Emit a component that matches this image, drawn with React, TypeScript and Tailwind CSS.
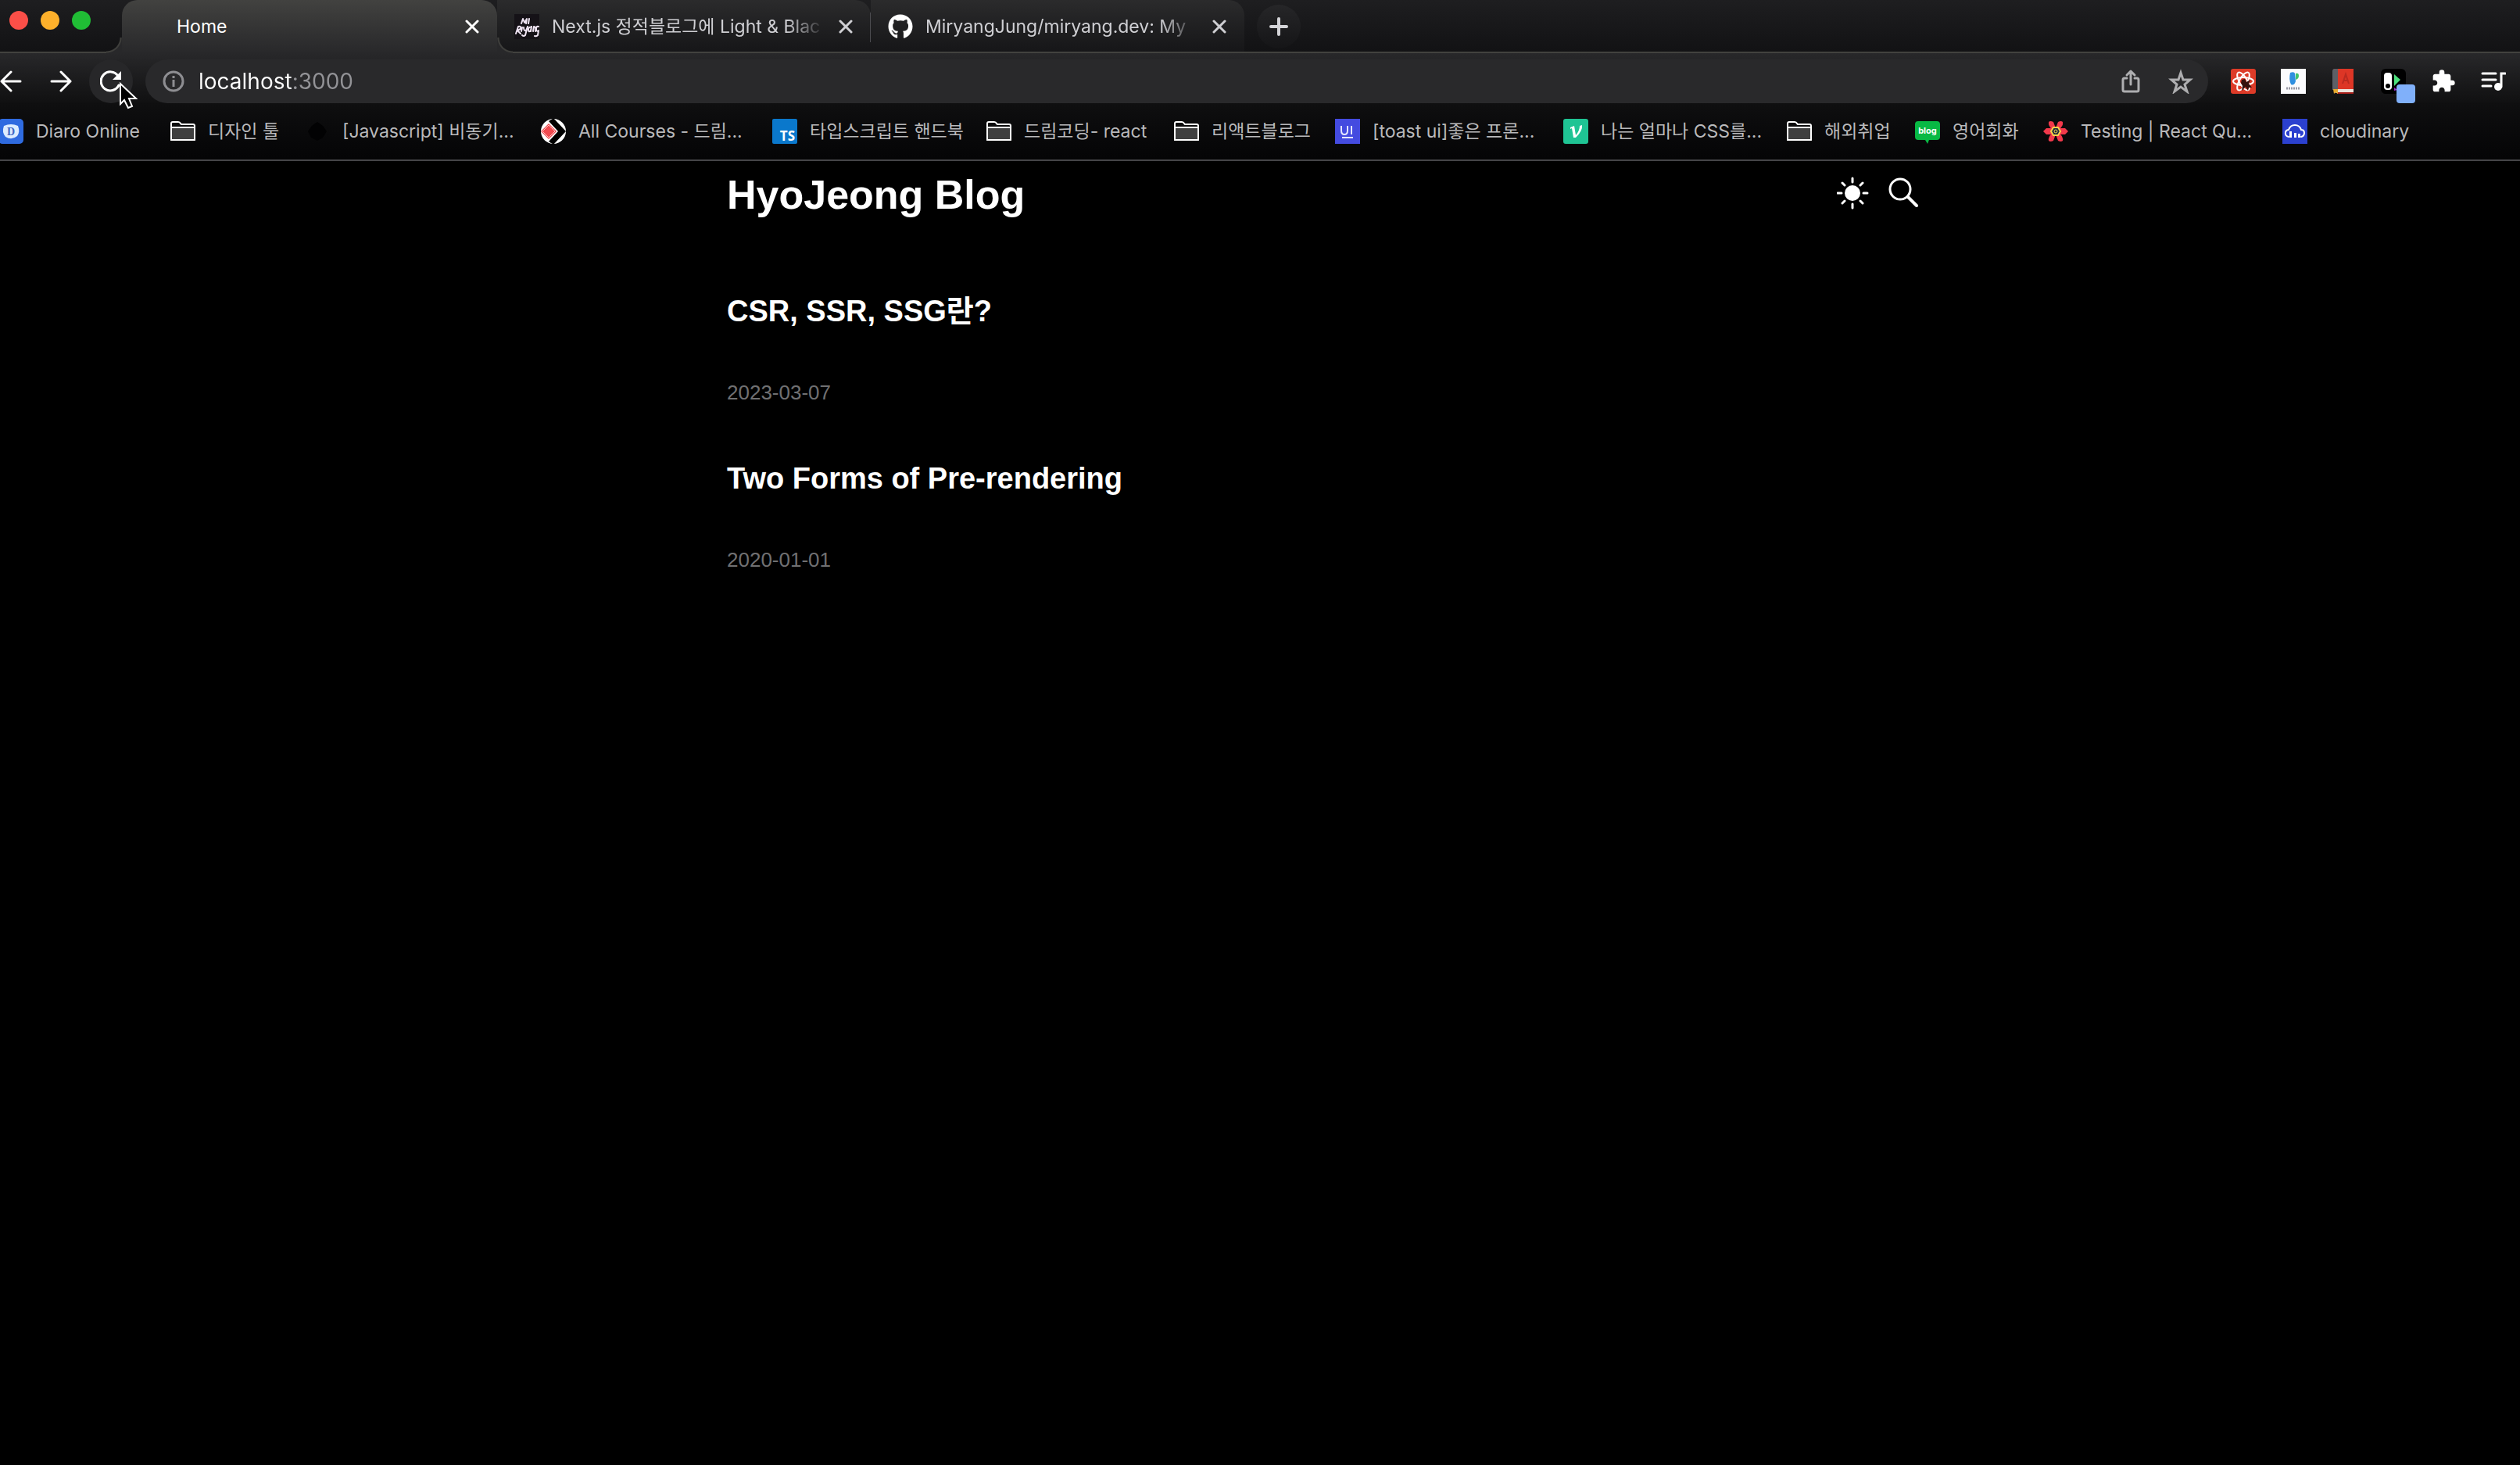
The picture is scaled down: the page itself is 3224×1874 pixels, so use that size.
import type { ReactNode } from 'react';
import { FaGithub } from 'react-icons/fa';
import { MdExtension } from 'react-icons/md';

function CloseIcon() {
  return (
    <svg viewBox="0 0 18 20" className="h-5 w-[18px]" fill="none" stroke="currentColor" strokeWidth="3" strokeLinecap="round">
      <path d="M2 3l14 14M16 3L2 17" />
    </svg>
  );
}

function MiryangIcon() {
  return (
    <svg viewBox="0 0 32 32" className="size-8" fill="none" stroke="#efe4f3" strokeWidth="2" strokeLinecap="round" strokeLinejoin="round">
      <rect width="32" height="32" fill="#151217" stroke="none" />
      <path d="M9 12l2-6 2 5 3-5-1 6M19 6l-1 6" />
      <path d="M2 25l3-9q4-1 3 3l-4 2 4 4M10 17l-1 5M12 17q0 5 3 4l2-5-3 11q-2 2-4 0M22 17q-4-1-4 3t3 1l1-5-1 6M24 22l1-6q3 0 2 6M31 16q-3-1-3 3t3 2l-1 6q-2 2-4 1" />
    </svg>
  );
}

function FolderIcon() {
  return (
    <svg viewBox="0 0 32 32" className="size-8" fill="none" stroke="#ffffff" strokeWidth="2" strokeLinejoin="round">
      <path d="M1 27V6q0-2 2-2h7q2 0 3 2l1 1h15q2 0 2 2v18z" />
      <path d="M1 11h30v16H1z" fill="#3f3f3f" />
    </svg>
  );
}

function DiaroIcon() {
  return (
    <svg viewBox="0 0 32 32" className="size-8">
      <rect width="32" height="32" rx="5" fill="#2f6be0" />
      <path d="M7 9q9-4 18 0 3 8-1 13-7 6-15 1-5-6-2-14z" fill="#dcecff" />
      <text x="16" y="21" textAnchor="middle" fontSize="14" fontWeight="700" fontFamily="Liberation Serif, serif" fill="#3d66c4">D</text>
    </svg>
  );
}

function DarkDotIcon() {
  return (
    <svg viewBox="0 0 32 32" className="size-8">
      <path d="M16 4l7 5 5 7-5 8-7 4-8-4-4-8 5-7z" fill="#020203" />
    </svg>
  );
}

function DreamIcon() {
  return (
    <svg viewBox="0 0 32 32" className="size-8">
      <defs>
        <clipPath id="dream-disc">
          <circle cx="16" cy="16" r="16" />
        </clipPath>
      </defs>
      <g clipPath="url(#dream-disc)">
        <rect width="32" height="32" fill="#ffffff" />
        <path d="M10 3l6-4 16 17-16 17-6-4 12-13z" fill="#000000" />
        <path d="M10 6l10 10-10 10L0 16z" fill="#f04a50" />
        <path d="M10 8l8 8-8 8-8-8z" fill="none" stroke="#ffc2c2" strokeWidth="1" />
      </g>
    </svg>
  );
}

function TsIcon() {
  return (
    <svg viewBox="0 0 32 32" className="size-8">
      <rect width="32" height="32" rx="2" fill="#0a78cc" />
      <text x="29" y="28" textAnchor="end" fontSize="17" fontWeight="700" fontFamily="Open Sans, sans-serif" fill="#ffffff">TS</text>
    </svg>
  );
}

function UiIcon() {
  return (
    <svg viewBox="0 0 32 32" className="size-8" fill="none" stroke="#e4e6ff" strokeWidth="2">
      <rect width="32" height="32" fill="#444be0" stroke="none" />
      <path d="M8 9v6q0 5 4 5t4-5V9M21 9v11M9 24h14" />
    </svg>
  );
}

function VelogIcon() {
  return (
    <svg viewBox="0 0 32 32" className="size-8">
      <rect width="32" height="32" rx="3" fill="#1fc494" />
      <path d="M9 11l5-2 2 12q5-6 5-12l3-1q1 7-8 16h-3L11 12l-2 1z" fill="#ffffff" />
    </svg>
  );
}

function BlogIcon() {
  return (
    <svg viewBox="0 0 32 32" className="size-8">
      <path d="M4 3h24q4 0 4 4v16q0 4-4 4H18l-2 5-3-5H4q-4 0-4-4V7q0-4 4-4z" fill="#08b944" />
      <text x="16" y="19" textAnchor="middle" fontSize="11" fontWeight="700" fontFamily="Inter, sans-serif" fill="#ffffff">blog</text>
    </svg>
  );
}

function ReactQueryIcon() {
  return (
    <svg viewBox="0 0 32 32" className="size-8">
      <g fill="#f2394b">
        <path d="M16 12L13 4q-4-2-6 0-1 5 5 10z" />
        <path d="M16 12l3-8q4-2 6 0 1 5-5 10z" />
        <path d="M16 20l-3 8q-4 2-6 0-1-5 5-10z" />
        <path d="M16 20l3 8q4 2 6 0 1-5-5-10z" />
        <path d="M12 12l-8 0-4 4 4 4 8 0z" />
        <path d="M20 12l8 0 4 4-4 4-8 0z" />
      </g>
      <path d="M13 11h6l3 5-3 5h-6l-3-5z" fill="#1d2b3d" stroke="#f7d54a" strokeWidth="2" />
      <circle cx="16" cy="16" r="2" fill="#1d2b3d" stroke="#f7d54a" strokeWidth="1" />
    </svg>
  );
}

function CloudinaryIcon() {
  return (
    <svg viewBox="0 0 32 32" className="size-8">
      <rect width="32" height="32" fill="#2b40cf" />
      <path d="M8 23q-5-1-4-6 1-3 4-3 2-6 8-6t8 6q4 0 4 4t-4 5" fill="none" stroke="#ffffff" strokeWidth="2" strokeLinecap="round" />
      <path d="M9 16h3v8h-3zM15 18h3v6h-3zM20 19h3v5h-3z" fill="#ffffff" />
    </svg>
  );
}

function AtomExtension() {
  return (
    <svg viewBox="0 0 32 32" className="size-8">
      <rect width="32" height="32" rx="3" fill="#dd3b28" />
      <g fill="none" stroke="#ffffff" strokeWidth="2">
        <ellipse cx="16" cy="16" rx="13" ry="5" />
        <ellipse cx="16" cy="16" rx="13" ry="5" transform="rotate(60 16 16)" />
        <ellipse cx="16" cy="16" rx="13" ry="5" transform="rotate(120 16 16)" />
      </g>
      <path d="M14 14l4-1 2 4 5-3-2 5 4 5-4 0-1 4-3-5-5 5 1-6-2-4z" fill="#33120e" />
    </svg>
  );
}

function LanguageExtension() {
  return (
    <svg viewBox="0 0 32 32" className="size-8">
      <rect width="32" height="32" fill="#fbfbfd" />
      <path d="M12 5q5-2 6 1l1 10q-2 6-6 4-3-6-1-15z" fill="#2f8fe0" />
      <path d="M19 6q4-1 4 3t-4 5z" fill="#3fc46b" />
      <path d="M7 25h18" stroke="#9a9aa6" strokeWidth="3" strokeDasharray="2 1" />
    </svg>
  );
}

function DictionaryExtension() {
  return (
    <svg viewBox="0 0 32 32" className="size-8">
      <path d="M3 2q0-2 2-2h24v27H3z" fill="#dd3626" />
      <path d="M2 3q0-3 3-3h4v27H2z" fill="#5c5f66" />
      <path d="M5 26h24v5H7q-4-1-2-5z" fill="#ece5dd" />
      <path d="M8 30h21v2H8z" fill="#a8201a" />
      <path d="M3 26l6 0 0 6-3-2-2 2z" fill="#e8a92c" />
      <path d="M15 19l4-12 4 12M16 15h6" fill="none" stroke="#b92a20" strokeWidth="2" />
    </svg>
  );
}

function SwitcherExtension() {
  return (
    <svg viewBox="0 0 32 32" className="size-8">
      <rect width="32" height="32" rx="6" fill="#000000" />
      <rect x="4" y="5" width="10" height="22" rx="4" fill="#ffffff" />
      <circle cx="9" cy="22" r="3" fill="#000000" />
      <path d="M17 7l8 7-8 8z" fill="#4be07c" />
      <path d="M17 24l4 3-4 1z" fill="#a32bd0" />
    </svg>
  );
}

interface TabProps {
  title: string;
  icon?: ReactNode;
  active?: boolean;
}

function Tab({ title, icon, active }: TabProps) {
  return (
    <div
      className={
        active
          ? 'relative z-10 -mb-0.5 flex w-[480px] items-center gap-3 rounded-t-[20px] bg-linear-to-b from-[#424240] to-[#28282a] pr-4 pl-[22px] text-white before:absolute before:bottom-0 before:-left-5 before:size-5 before:bg-[radial-gradient(circle_at_0_0,transparent_17px,#3f3f3c_18px,#3f3f3c_19px,#28282a_20px)] after:absolute after:-right-5 after:bottom-0 after:size-5 after:bg-[radial-gradient(circle_at_100%_0,transparent_17px,#3f3f3c_18px,#3f3f3c_19px,#28282a_20px)]'
          : 'flex w-[478px] items-center gap-3 rounded-tr-[20px] bg-linear-to-b from-[#2b2b2c] to-[#161618] pt-0.5 pr-4 pl-[22px] text-[#cfcfd3]'
      }
    >
      <button type="button" role="tab" aria-selected={!!active} className="flex min-w-0 flex-1 items-center gap-4">
        <span className="size-8 shrink-0">{icon}</span>
        <span
          className={
            active
              ? 'overflow-hidden text-[23px] leading-8 whitespace-nowrap'
              : 'overflow-hidden [mask-image:linear-gradient(to_right,black_300px,transparent_350px)] text-[23px] leading-8 whitespace-nowrap'
          }
        >
          {title}
        </span>
      </button>
      <button type="button" aria-label={`Close ${title}`} className="flex size-8 shrink-0 items-center justify-center">
        <CloseIcon />
      </button>
    </div>
  );
}

const bookmarks: { label: string; icon: ReactNode; width: string }[] = [
  { label: 'Diaro Online', icon: <DiaroIcon />, width: 'w-[220px]' },
  { label: '디자인 툴', icon: <FolderIcon />, width: 'w-[172px]' },
  { label: '[Javascript] 비동기...', icon: <DarkDotIcon />, width: 'w-[302px]' },
  { label: 'All Courses - 드림...', icon: <DreamIcon />, width: 'w-[296px]' },
  { label: '타입스크립트 핸드북', icon: <TsIcon />, width: 'w-[274px]' },
  { label: '드림코딩- react', icon: <FolderIcon />, width: 'w-[240px]' },
  { label: '리액트블로그', icon: <FolderIcon />, width: 'w-[206px]' },
  { label: '[toast ui]좋은 프론...', icon: <UiIcon />, width: 'w-[292px]' },
  { label: '나는 얼마나 CSS를...', icon: <VelogIcon />, width: 'w-[286px]' },
  { label: '해외취업', icon: <FolderIcon />, width: 'w-[164px]' },
  { label: '영어회화', icon: <BlogIcon />, width: 'w-[164px]' },
  { label: 'Testing | React Qu...', icon: <ReactQueryIcon />, width: 'w-[306px]' },
  { label: 'cloudinary', icon: <CloudinaryIcon />, width: 'w-[180px]' },
];

const posts = [
  { title: 'CSR, SSR, SSG란?', date: '2023-03-07' },
  { title: 'Two Forms of Pre-rendering', date: '2020-01-01' },
];

function TabStrip() {
  return (
    <div className="flex h-[68px] border-b-2 border-[#42423f] bg-linear-to-b from-[#1e1e20] to-[#121214]">
      <div className="flex w-[156px] shrink-0 gap-4 pt-3.5 pl-3">
        <button type="button" aria-label="Close window" className="size-6 rounded-full bg-[#fb4f48]" />
        <button type="button" aria-label="Minimize window" className="size-6 rounded-full bg-[#fdb02b]" />
        <button type="button" aria-label="Zoom window" className="size-6 rounded-full bg-[#20bd35]" />
      </div>
      <div role="tablist" className="flex">
        <Tab title="Home" active />
        <Tab title="Next.js 정적블로그에 Light & Blac" icon={<MiryangIcon />} />
        <span className="-mx-px mt-4 h-[38px] w-0.5 bg-[#4c4c50]" />
        <Tab title="MiryangJung/miryang.dev: My" icon={<FaGithub className="size-8 text-white" />} />
      </div>
      <button
        type="button"
        aria-label="New tab"
        className="mt-1.5 ml-4 flex size-14 items-center justify-center rounded-full bg-linear-to-b from-[#262628] to-[#151517] text-[#d4d4d8]"
      >
        <svg viewBox="0 0 24 24" className="size-6" stroke="currentColor" strokeWidth="4" strokeLinecap="round">
          <path d="M12 2v20M2 12h20" />
        </svg>
      </button>
    </div>
  );
}

function Toolbar() {
  return (
    <div className="flex h-16 items-end bg-linear-to-b from-[#28282a] to-[#101011] pr-[18px] text-white">
      <button type="button" aria-label="Back" className="flex h-14 w-7 items-center">
        <svg viewBox="0 0 28 28" className="size-7" fill="none" stroke="currentColor" strokeWidth="3" strokeLinecap="round" strokeLinejoin="round">
          <path d="M26 14H2M14 2L2 14l12 12" />
        </svg>
      </button>
      <button type="button" aria-label="Forward" className="ml-9 flex h-14 w-7 items-center">
        <svg viewBox="0 0 28 28" className="size-7" fill="none" stroke="currentColor" strokeWidth="3" strokeLinecap="round" strokeLinejoin="round">
          <path d="M2 14h24M14 2l12 12-12 12" />
        </svg>
      </button>
      <button type="button" aria-label="Reload" className="relative ml-[22px] flex size-14 items-center justify-center rounded-full bg-[#272729]">
        <svg viewBox="0 0 28 28" className="size-7" fill="none" stroke="currentColor" strokeWidth="3" strokeLinecap="round">
          <path d="M24 19A12 12 0 1 1 23 7" />
          <path d="M27 1v11H16z" fill="currentColor" stroke="none" />
        </svg>
        <svg viewBox="0 0 24 36" className="absolute top-7 left-[38px] z-20 h-9 w-6" fill="#000000" stroke="#ffffff" strokeWidth="2">
          <path d="M2 3v26l5-5 5 10 5-2-4-10h9z" />
        </svg>
      </button>
      <div className="ml-4 flex h-14 min-w-0 flex-1 items-center rounded-full bg-[#29292b] pr-[19px] pl-[22px] text-[#aeaeb0]">
        <button type="button" aria-label="View site information" className="text-[#8e8e92]">
          <svg viewBox="0 0 28 28" className="size-7" fill="none" stroke="currentColor" strokeWidth="3">
            <circle cx="14" cy="14" r="12" />
            <path d="M14 12v9M14 7v3" />
          </svg>
        </button>
        <input
          type="text"
          aria-label="Address"
          defaultValue="localhost:3000"
          className="ml-[18px] h-10 min-w-0 flex-1 bg-[linear-gradient(to_right,#ffffff_122px,#939397_122px)] bg-clip-text text-[28px] text-transparent outline-none"
        />
        <button type="button" aria-label="Share">
          <svg viewBox="0 0 32 32" className="size-8" fill="none" stroke="currentColor" strokeWidth="3" strokeLinecap="round" strokeLinejoin="round">
            <path d="M11 12H8q-2 0-2 2v13q0 2 2 2h16q2 0 2-2V14q0-2-2-2h-3M16 20V4M11 8l5-5 5 5" />
          </svg>
        </button>
        <button type="button" aria-label="Bookmark this tab" className="ml-8">
          <svg viewBox="0 0 32 32" className="size-8" fill="none" stroke="currentColor" strokeWidth="3">
            <path d="M16 5l3 9 9 0-7 6 3 9-8-6-8 6 3-9-7-6 9 0z" />
          </svg>
        </button>
      </div>
      <div className="ml-[29px] flex h-14 items-center gap-8">
        <button type="button" aria-label="React developer tools"><AtomExtension /></button>
        <button type="button" aria-label="Language"><LanguageExtension /></button>
        <button type="button" aria-label="Dictionary"><DictionaryExtension /></button>
        <button type="button" aria-label="Switcher" className="relative">
          <SwitcherExtension />
          <span className="absolute top-5 left-5 size-6 rounded bg-[#80b0fa]" />
        </button>
        <button type="button" aria-label="Extensions"><MdExtension className="size-8" /></button>
        <button type="button" aria-label="Media controls">
          <svg viewBox="0 0 32 32" className="size-8" fill="none" stroke="currentColor" strokeWidth="3" strokeLinecap="round">
            <path d="M2 6h17M2 14h17M2 22h11M26 23V6h5" />
            <circle cx="22" cy="23" r="5" fill="currentColor" stroke="none" />
          </svg>
        </button>
      </div>
    </div>
  );
}

function BookmarksBar() {
  return (
    <nav aria-label="Bookmarks" className="h-[74px] overflow-hidden border-b-2 border-[#454548] bg-linear-to-b from-[#0f0f10] to-[#050506]">
      <ul className="-ml-0.5 flex h-full items-center">
        {bookmarks.map((b) => (
          <li key={b.label} className={`shrink-0 ${b.width}`}>
            <a href="#" className="flex items-center gap-4 text-[23px] leading-8 whitespace-nowrap text-[#b9b9bb]">
              <span className="shrink-0">{b.icon}</span>
              {b.label}
            </a>
          </li>
        ))}
      </ul>
    </nav>
  );
}

function Blog() {
  return (
    <main className="grid grid-cols-[930fr_1526fr_768fr] font-['Liberation_Sans','Noto_Sans_CJK_KR',sans-serif]">
      <div className="col-start-2 pt-3.5">
        <header className="flex items-start justify-between">
          <h1 className="text-[52px] leading-[58px] font-bold">
            <a href="#">HyoJeong Blog</a>
          </h1>
          <div className="flex h-[54px] items-center gap-6">
            <button type="button" aria-label="Toggle theme">
              <svg viewBox="0 0 42 42" className="size-[42px]" fill="none" stroke="#ffffff" strokeWidth="3" strokeLinecap="round">
                <circle cx="20" cy="21" r="10" fill="#ffffff" stroke="none" />
                <path d="M20 2v5M20 35v5M1 21h5M34 21h5M7 8l3 3M30 31l3 3M33 8l-3 3M10 31l-3 3" />
              </svg>
            </button>
            <button type="button" aria-label="Search">
              <svg viewBox="0 0 40 40" className="size-10" fill="none" stroke="#ffffff" strokeLinecap="round">
                <circle cx="15" cy="15" r="13" strokeWidth="3" />
                <path d="M25 25l11 11" strokeWidth="4" />
              </svg>
            </button>
          </div>
        </header>
        <div className="mt-[98px] flex flex-col gap-[72px]">
          {posts.map((p) => (
            <article key={p.date} className="flex flex-col gap-[66px]">
              <h2 className="text-[38px] leading-[44px] font-bold">
                <a href="#">{p.title}</a>
              </h2>
              <time dateTime={p.date} className="text-[26px] leading-8 text-[#707072]">
                {p.date}
              </time>
            </article>
          ))}
        </div>
      </div>
    </main>
  );
}

export default function App() {
  return (
    <div className="min-h-screen overflow-x-hidden bg-black font-['Inter','Noto_Sans_CJK_KR',sans-serif] text-white">
      <TabStrip />
      <Toolbar />
      <BookmarksBar />
      <Blog />
    </div>
  );
}
